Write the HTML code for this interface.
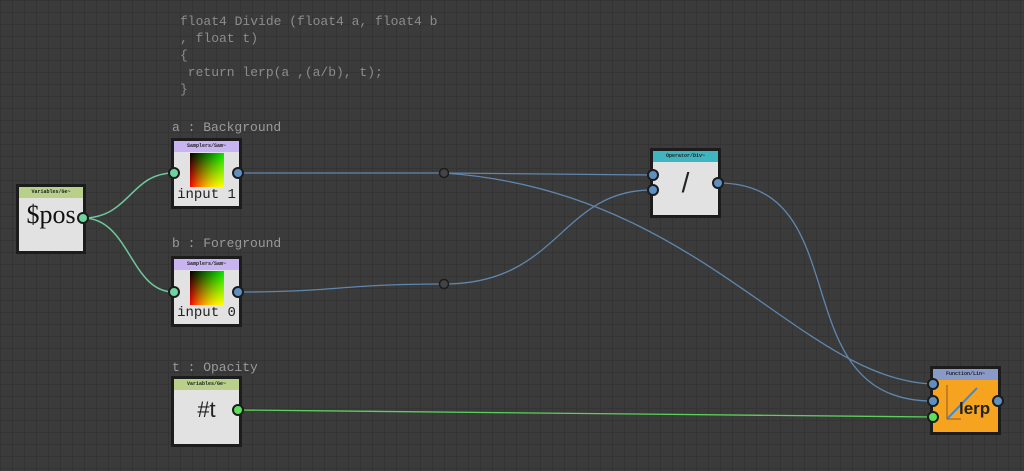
<!DOCTYPE html>
<html><head><style>
body{margin:0;width:1024px;height:471px;overflow:hidden;background-color:#3b3b3b;
background-image:linear-gradient(#343434 1px,transparent 1px),linear-gradient(90deg,#343434 1px,transparent 1px);
background-size:12px 12px;font-family:"Liberation Mono",monospace;position:relative}
.node{position:absolute;background:#e2e2e2;border:3px solid #1c1c1c;box-sizing:border-box}
.hd{height:11px;font-size:5px;font-weight:bold;text-align:center;line-height:11px;color:#222;font-family:"Liberation Mono",monospace}
.lbl{position:absolute;color:#9a9a9a;font-size:13px;font-family:"Liberation Mono",monospace}
.code{position:absolute;left:180px;top:13px;color:#8c8c8c;font-size:13px;line-height:17px;white-space:pre;font-family:"Liberation Mono",monospace}
.grad{position:absolute;left:16px;top:12px;width:34px;height:34px;
background:linear-gradient(to bottom,rgba(0,0,0,1),rgba(0,0,0,0)),linear-gradient(to right,#f00,#ff0);}
.grad2{position:absolute;left:16px;top:12px;width:34px;height:34px;background:linear-gradient(to right,rgba(0,255,0,0),rgba(0,255,0,.9));mix-blend-mode:screen}
.big{position:absolute;width:100%;text-align:center;font-family:"Liberation Serif",serif}
</style></head><body>
<div class="code">float4 Divide (float4 a, float4 b
, float t)
{
 return lerp(a ,(a/b), t);
}</div>
<div class="lbl" style="left:172px;top:120px">a : Background</div>
<div class="lbl" style="left:172px;top:236px">b : Foreground</div>
<div class="lbl" style="left:172px;top:360px">t : Opacity</div>

<svg width="1024" height="471" style="position:absolute;left:0;top:0" fill="none">
<g stroke="#6cc99c" stroke-width="1.5">
<path d="M83 218 C130 218,130 173,174 173"/>
<path d="M83 218 C130 218,130 292,174 292"/>
</g>
<g stroke="#5f86ad" stroke-width="1.3">
<path d="M238 173 L444 173"/>
<path d="M444 173 L652 175"/>
<path d="M444 173 C700 190,800 380,933 384"/>
<path d="M238 292 C340 292,340 284,444 284"/>
<path d="M444 284 C560 284,560 190,652 190"/>
<path d="M718 183 C860 183,780 401,933 401"/>
</g>
<path d="M238 410 L933 417" stroke="#5cd05c" stroke-width="1.3"/>
<circle cx="444" cy="173" r="4.5" fill="#444" stroke="#1c1c1c" stroke-width="1.5"/>
<circle cx="444" cy="284" r="4.5" fill="#444" stroke="#1c1c1c" stroke-width="1.5"/>
</svg>

<div class="node" style="left:16px;top:184px;width:70px;height:70px">
<div class="hd" style="background:#b8d08a">Variables/Ge~</div>
<div class="big" style="top:13px;font-size:26px;color:#111">$pos</div></div>

<div class="node" style="left:171px;top:138px;width:71px;height:71px">
<div class="hd" style="background:#c8b4f0">Samplers/Sam~</div>
<div class="grad"></div><div class="grad2"></div>
<div class="big" style="top:46px;font-size:14px;font-family:'Liberation Mono',monospace;color:#222">input 1</div></div>

<div class="node" style="left:171px;top:256px;width:71px;height:71px">
<div class="hd" style="background:#c8b4f0">Samplers/Sam~</div>
<div class="grad"></div><div class="grad2"></div>
<div class="big" style="top:46px;font-size:14px;font-family:'Liberation Mono',monospace;color:#222">input 0</div></div>

<div class="node" style="left:171px;top:376px;width:71px;height:71px">
<div class="hd" style="background:#b8d08a">Variables/Ge~</div>
<div class="big" style="top:18px;font-size:22px;font-family:'Liberation Sans',sans-serif;color:#222">#t</div></div>

<div class="node" style="left:650px;top:148px;width:71px;height:70px">
<div class="hd" style="background:#3fb6bf">Operator/Div~</div>
<div class="big" style="top:16px;font-size:28px;font-family:'Liberation Sans',sans-serif;color:#222">/</div></div>

<div class="node" style="left:930px;top:366px;width:71px;height:69px;background:#f6a41f">
<div class="hd" style="background:#8a9ac8">Function/Lin~</div>
<svg width="65" height="52" style="position:absolute;left:0;top:11px" fill="none">
<path d="M14 5 V39 H28" stroke="#8a5a2a" stroke-width="1"/>
<path d="M15 38 L44 8" stroke="#3a8be0" stroke-width="2"/></svg>
<div style="position:absolute;left:26px;top:30px;font:bold 17px 'Liberation Sans',sans-serif;color:#222">lerp</div></div>

<svg width="1024" height="471" style="position:absolute;left:0;top:0">
<g stroke="#1c1c1c" stroke-width="2">
<circle cx="83" cy="218" r="5" fill="#6cd49c"/>
<circle cx="174" cy="173" r="5" fill="#6cd49c"/>
<circle cx="174" cy="292" r="5" fill="#6cd49c"/>
<circle cx="238" cy="173" r="5" fill="#5f8fc0"/>
<circle cx="238" cy="292" r="5" fill="#5f8fc0"/>
<circle cx="238" cy="410" r="5" fill="#5ae05a"/>
<circle cx="653" cy="175" r="5" fill="#5f8fc0"/>
<circle cx="653" cy="190" r="5" fill="#5f8fc0"/>
<circle cx="718" cy="183" r="5" fill="#5f8fc0"/>
<circle cx="933" cy="384" r="5" fill="#5f8fc0"/>
<circle cx="933" cy="401" r="5" fill="#5f8fc0"/>
<circle cx="933" cy="417" r="5" fill="#5ae05a"/>
<circle cx="998" cy="401" r="5" fill="#5f8fc0"/>
</g></svg>
</body></html>
